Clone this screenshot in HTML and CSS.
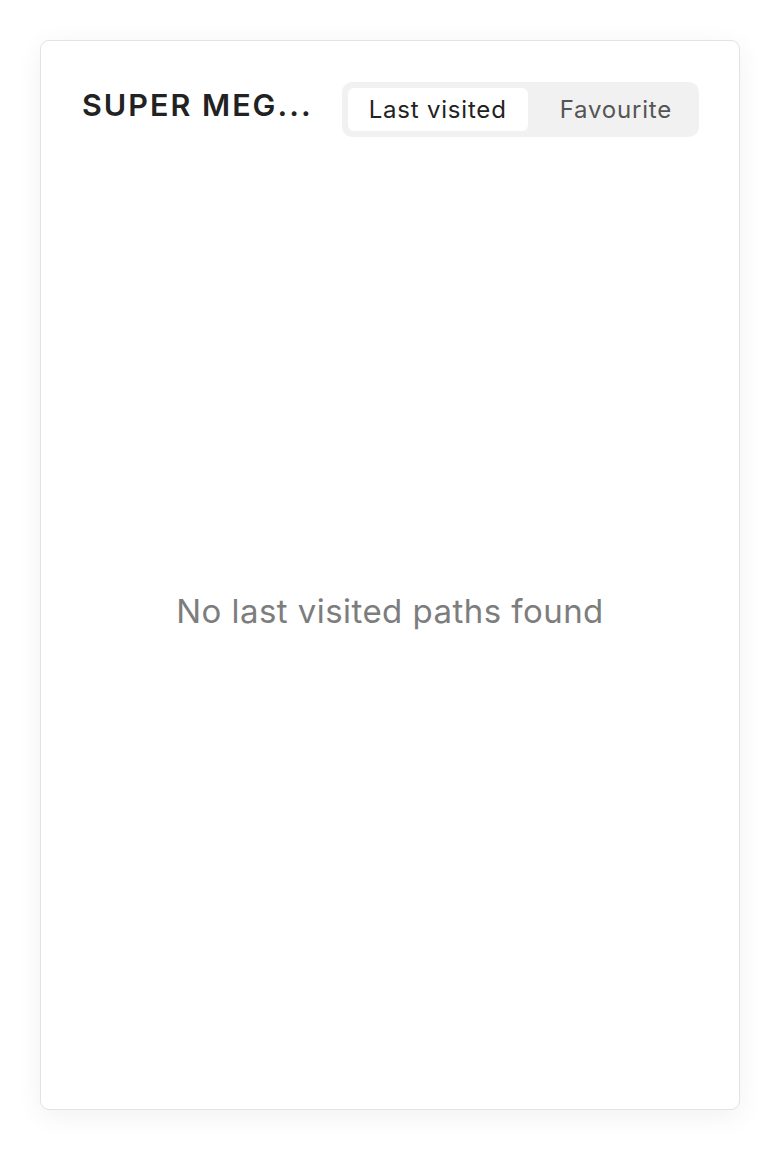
FILE: index.html
```html
<!DOCTYPE html>
<html lang="en">
<head>
<meta charset="utf-8">
<title>Paths</title>
<link rel="stylesheet" href="styles.css">
</head>
<body>
  <div class="card">
    <div class="card-header">
      <h2 class="title">SUPER MEG...</h2>
      <div class="tabs">
        <button class="tab active">Last visited</button>
        <button class="tab">Favourite</button>
      </div>
    </div>
    <div class="card-body">
      <p class="empty">No last visited paths found</p>
    </div>
  </div>
</body>
</html>
```

FILE: styles.css
```css
* { box-sizing: border-box; }
html, body { margin: 0; padding: 0; background: #ffffff; }
body {
  font-family: Inter, "Noto Sans", sans-serif;
  padding: 40px;
  height: 1150px;
}
.card {
  height: 1070px;
  border: 1px solid #e3e3e3;
  border-radius: 9px;
  background: #fff;
  box-shadow: 0 6px 28px rgba(0,0,0,0.06);
  padding: 41px 40px 40px 40px;
  display: flex;
  flex-direction: column;
}
.card-header {
  display: flex;
  align-items: flex-start;
  justify-content: space-between;
  gap: 24px;
}
.title {
  margin: 0;
  padding: 5px 0 0 1px;
  font-size: 30.5px;
  line-height: 1.21;
  font-weight: 600;
  letter-spacing: 2px;
  color: #222;
  white-space: nowrap;
  overflow: hidden;
  text-overflow: ellipsis;
  min-width: 0;
}
.tabs {
  display: flex;
  gap: 11px;
  background: #f1f1f1;
  border-radius: 10px;
  padding: 6px;
  flex-shrink: 0;
}
.tab {
  border: 0;
  background: transparent;
  font-family: inherit;
  font-size: 24px;
  letter-spacing: 0.8px;
  color: #555;
  padding: 0 21px;
  height: 43px;
  border-radius: 6px;
}
.tab.active {
  background: #fff;
  color: #222;
}
.card-body {
  flex: 1;
  display: flex;
  align-items: center;
  justify-content: center;
  padding-top: 16px;
}
.empty {
  margin: 0;
  font-size: 33px;
  letter-spacing: 0.45px;
  color: #7d7d7d;
}
```
